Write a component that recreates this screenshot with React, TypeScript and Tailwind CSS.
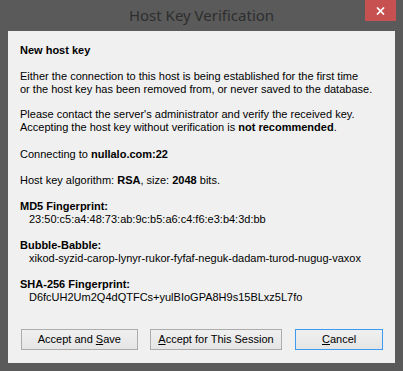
import React from 'react';

const Btn: React.FC<{ focused?: boolean; className?: string; children: React.ReactNode }> = ({ focused, className, children }) => (
  <button
    className={`h-[21px] border bg-gradient-to-b from-[#f0f0f0] to-[#e5e5e5] text-[11px] leading-[13px] text-black ${
      focused ? 'border-[#3c9bf0]' : 'border-[#acacac]'
    } ${className ?? ''}`}
  >
    {children}
  </button>
);

export default function App() {
  return (
    <div className="relative h-[371px] w-[403px] overflow-hidden bg-[#5a5a5a]" style={{ fontFamily: '"Liberation Sans", Tahoma, sans-serif' }}>
      <div className="flex h-[31px] items-center justify-center">
        <span className="text-[15px] text-[#2e2e2e]" style={{ fontFamily: '"Noto Sans", "Open Sans", sans-serif' }}>
          Host Key Verification
        </span>
      </div>
      <button className="absolute right-[7px] top-0 flex h-[21px] w-[31px] items-center justify-center bg-[#c75050]">
        <svg width="9" height="8" viewBox="0 0 9 8">
          <path d="M1 0.5 L8 7.5 M8 0.5 L1 7.5" stroke="#fff" strokeWidth="1.7" />
        </svg>
      </button>
      <div className="mx-[8px] h-[332px] w-[387px] whitespace-nowrap bg-[#f0f0f0] px-[12px] pt-[13px] text-[11px] leading-[13px] text-black">
        <div className="font-bold">New host key</div>
        <div className="mt-[13px]">
          Either the connection to this host is being established for the first time
          <br />
          or the host key has been removed from, or never saved to the database.
        </div>
        <div className="mt-[12px]">
          Please contact the server's administrator and verify the received key.
          <br />
          Accepting the host key without verification is <b>not recommended</b>.
        </div>
        <div className="mt-[14px]">
          Connecting to <b>nullalo.com:22</b>
        </div>
        <div className="mt-[13px]">
          Host key algorithm: <b>RSA</b>, size: <b>2048</b> bits.
        </div>
        <div className="mt-[13px] font-bold">MD5 Fingerprint:</div>
        <div className="pl-[9px]">23:50:c5:a4:48:73:ab:9c:b5:a6:c4:f6:e3:b4:3d:bb</div>
        <div className="mt-[13px] font-bold">Bubble-Babble:</div>
        <div className="pl-[9px]">xikod-syzid-carop-lynyr-rukor-fyfaf-neguk-dadam-turod-nugug-vaxox</div>
        <div className="mt-[13px] font-bold">SHA-256 Fingerprint:</div>
        <div className="pl-[9px]">D6fcUH2Um2Q4dQTFCs+yulBIoGPA8H9s15BLxz5L7fo</div>
        <div className="mt-[25px] flex pl-[1px]">
          <Btn className="w-[117px]">
            Accept and <u>S</u>ave
          </Btn>
          <Btn className="ml-[12px] w-[133px]">
            <u>A</u>ccept for This Session
          </Btn>
          <Btn focused className="ml-[13px] w-[88px]">
            <u>C</u>ancel
          </Btn>
        </div>
      </div>
    </div>
  );
}
